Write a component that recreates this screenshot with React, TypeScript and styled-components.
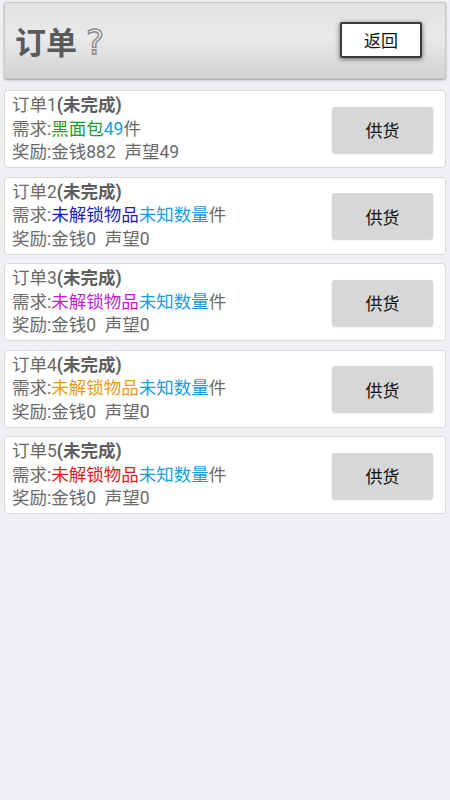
import React from "react";
import styled, { createGlobalStyle } from "styled-components";

const Global = createGlobalStyle`
  html, body { margin: 0; padding: 0; background: #efeff3; }
  body { font-family: Roboto, "Noto Sans CJK SC", "Noto Sans", sans-serif; }
  * { box-sizing: border-box; }
`;

const Page = styled.div`
  width: 450px;
  min-height: 800px;
  background: #efeff3;
  padding: 2px 4px 0 4px;
  display: flex;
  flex-direction: column;
`;

const Header = styled.div`
  height: 77px;
  display: flex;
  align-items: center;
  justify-content: space-between;
  padding: 0 23px 0 10px;
  background: linear-gradient(to bottom, #e2e2e2 0%, #e9e9e9 45%, #d2d2d2 100%);
  border: 1px solid #c8c8c8;
  border-radius: 2px;
  box-shadow: 0 1px 2px rgba(0, 0, 0, 0.35);
`;

const TitleWrap = styled.div`
  display: flex;
  align-items: center;
  gap: 9px;
`;

const Title = styled.span`
  font-family: "Noto Sans CJK SC", sans-serif;
  font-size: 31px;
  font-weight: bold;
  color: #5a5a5a;
`;

const Help = styled.span`
  font-family: "DejaVu Sans", sans-serif;
  font-size: 34px;
  line-height: 1;
  color: #efefef;
  -webkit-text-stroke: 1.4px #8a8a8a;
  margin-top: 3px;
`;

const BackButton = styled.button`
  width: 82px;
  height: 36px;
  margin-top: -2px;
  background: #ffffff;
  border: 2px solid #3a3a3a;
  border-radius: 2px;
  box-shadow: 0 1px 5px rgba(0, 0, 0, 0.6);
  font-family: "Noto Sans CJK SC", sans-serif;
  font-size: 17px;
  color: #111;
  padding: 0;
`;

const List = styled.div`
  display: flex;
  flex-direction: column;
  gap: 8.5px;
  margin-top: 11px;
`;

const Card = styled.div`
  height: 78px;
  background: #ffffff;
  border: 1px solid #d9d9d9;
  border-radius: 4px;
  display: flex;
  align-items: center;
  justify-content: space-between;
  padding: 0 12px 0 7px;
`;

const Info = styled.div`
  display: flex;
  flex-direction: column;
  font-size: 17.5px;
  line-height: 23.5px;
  color: #6a6a6a;
  margin-top: 1px;
`;

const Line = styled.div`
  white-space: nowrap;
`;

const Status = styled.b`
  font-weight: bold;
  color: #5e5e5e;
`;

const Colored = styled.span<{ $c: string }>`
  color: ${(p) => p.$c};
`;

const SupplyButton = styled.button`
  width: 101px;
  height: 46px;
  margin-top: 1px;
  background: #d7d7d7;
  border: none;
  border-radius: 3px;
  box-shadow: 0 1px 2px rgba(0, 0, 0, 0.2);
  font-family: "Noto Sans CJK SC", sans-serif;
  font-size: 17px;
  color: #111;
  padding: 0;
`;

type Order = {
  id: number;
  item: string;
  itemColor: string;
  count: string;
  money: number;
  fame: number;
};

const orders: Order[] = [
  { id: 1, item: "黑面包", itemColor: "#1f9a2e", count: "49", money: 882, fame: 49 },
  { id: 2, item: "未解锁物品", itemColor: "#1c1cc4", count: "未知数量", money: 0, fame: 0 },
  { id: 3, item: "未解锁物品", itemColor: "#c21fd0", count: "未知数量", money: 0, fame: 0 },
  { id: 4, item: "未解锁物品", itemColor: "#eb9a1c", count: "未知数量", money: 0, fame: 0 },
  { id: 5, item: "未解锁物品", itemColor: "#e01b1b", count: "未知数量", money: 0, fame: 0 },
];

export default function App() {
  return (
    <>
      <Global />
      <Page>
        <Header>
          <TitleWrap>
            <Title>订单</Title>
            <Help>?</Help>
          </TitleWrap>
          <BackButton>返回</BackButton>
        </Header>
        <List>
          {orders.map((o) => (
            <Card key={o.id}>
              <Info>
                <Line>
                  订单{o.id}
                  <Status>(未完成)</Status>
                </Line>
                <Line>
                  需求:<Colored $c={o.itemColor}>{o.item}</Colored>
                  <Colored $c="#1a9be0">{o.count}</Colored>件
                </Line>
                <Line>
                  奖励:金钱{o.money}&nbsp;&nbsp;声望{o.fame}
                </Line>
              </Info>
              <SupplyButton>供货</SupplyButton>
            </Card>
          ))}
        </List>
      </Page>
    </>
  );
}
